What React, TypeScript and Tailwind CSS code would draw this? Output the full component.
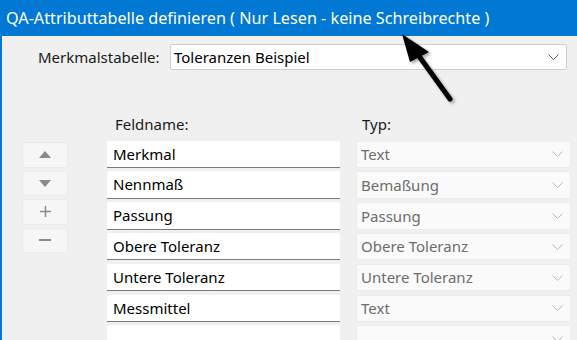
const fields = [
  { name: "Merkmal", typ: "Text" },
  { name: "Nennmaß", typ: "Bemaßung" },
  { name: "Passung", typ: "Passung" },
  { name: "Obere Toleranz", typ: "Obere Toleranz" },
  { name: "Untere Toleranz", typ: "Untere Toleranz" },
  { name: "Messmittel", typ: "Text" },
  { name: "", typ: "" },
];

function Chevron({ className }: { className: string }) {
  return (
    <svg width="11" height="6" viewBox="0 0 11 6" className={className}>
      <path d="M0.5 0.5 L5.5 5.5 L10.5 0.5" fill="none" stroke="currentColor" strokeWidth="1" />
    </svg>
  );
}

function SideButton({ children }: { children: React.ReactNode }) {
  return (
    <div className="w-[46px] h-[25.5px] rounded-[3px] bg-[#f6f6f6] border border-[#eaeaea] flex items-center justify-center text-[#8a8a8a]">
      {children}
    </div>
  );
}

export default function App() {
  return (
    <div
      className="relative w-[577px] h-[340px] overflow-hidden bg-[#f0f0f0]"
      style={{ fontFamily: '"Noto Sans", sans-serif' }}
    >
      <div className="h-[36px] bg-[#0078d4] text-white text-[16.2px] leading-none flex items-center pl-[6px]">
        QA-Attributtabelle definieren ( Nur Lesen - keine Schreibrechte )
      </div>
      <div className="flex h-[304px]">
        <div className="w-[2px] bg-[#0078d4]" />
        <div className="flex-1 flex flex-col">
          <div className="flex items-center mt-[8px] h-[26px]">
            <span className="ml-[36px] w-[132px] text-[15px] text-[#1a1a1a]">Merkmalstabelle:</span>
            <div className="w-[397px] h-[26px] bg-white border border-[#cfcfcf] rounded-[2px] flex items-center justify-between pl-[3px] pr-[7px] text-[15px] text-black">
              <span>Toleranzen Beispiel</span>
              <Chevron className="text-[#606060]" />
            </div>
          </div>

          <div className="flex mt-[40px]">
            <div className="w-[105px] flex flex-col">
              <div className="h-[28px]" />
              <div className="ml-[20px] mt-[4px] flex flex-col gap-[3px]">
                <SideButton>
                  <svg width="12" height="7" viewBox="0 0 12 7"><path d="M0 7 L6 0 L12 7 Z" fill="currentColor" /></svg>
                </SideButton>
                <SideButton>
                  <svg width="12" height="7" viewBox="0 0 12 7"><path d="M0 0 L6 7 L12 0 Z" fill="currentColor" /></svg>
                </SideButton>
                <SideButton>
                  <svg width="11" height="11" viewBox="0 0 11 11"><path d="M5.5 0 V11 M0 5.5 H11" stroke="currentColor" strokeWidth="1.5" /></svg>
                </SideButton>
                <SideButton>
                  <svg width="12" height="2" viewBox="0 0 12 2"><path d="M0 1 H12" stroke="currentColor" strokeWidth="2" /></svg>
                </SideButton>
              </div>
            </div>

            <div className="w-[233px] flex flex-col">
              <div className="h-[28px] pl-[8px] text-[15px] text-[#1a1a1a] leading-[28px]">Feldname:</div>
              <div className="mt-[2.7px] flex flex-col gap-[3.5px]">
                {fields.map((f, i) => (
                  <div key={i} className="h-[27.3px] bg-white border-b-[1.5px] border-[#7a7a7a] rounded-t-[2px] pl-[6px] flex items-center text-[15px] text-black">
                    {f.name}
                  </div>
                ))}
              </div>
            </div>

            <div className="ml-[16px] w-[215px] flex flex-col">
              <div className="h-[28px] pl-[6px] text-[15px] text-[#1a1a1a] leading-[28px]">Typ:</div>
              <div className="mt-[2.7px] flex flex-col gap-[3.5px]">
                {fields.map((f, i) => (
                  <div key={i} className="h-[27.3px] bg-[#fafafa] border border-[#ececec] rounded-[2px] pl-[4px] pr-[7px] flex items-center justify-between text-[15px] text-[#6d6d6d]">
                    <span>{f.typ}</span>
                    <Chevron className="text-[#b8b8b8]" />
                  </div>
                ))}
              </div>
            </div>
          </div>
        </div>
      </div>

      <svg className="absolute left-0 top-0 pointer-events-none" width="577" height="340">
        <defs>
          <filter id="sh" x="-20%" y="-20%" width="140%" height="140%">
            <feDropShadow dx="2" dy="2" stdDeviation="1.5" floodColor="#000" floodOpacity="0.35" />
          </filter>
        </defs>
        <g filter="url(#sh)">
          <line x1="450" y1="99" x2="416" y2="52" stroke="#000" strokeWidth="5" strokeLinecap="round" />
          <path d="M402 34 L429 52 L410 62 Z" fill="#000" />
        </g>
      </svg>
    </div>
  );
}
